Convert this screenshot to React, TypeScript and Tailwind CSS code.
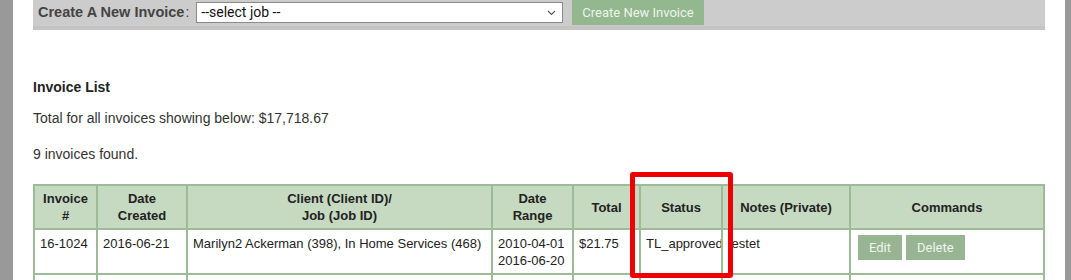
import React from 'react';

const rows = [
    {
        id: '16-1024',
        created: '2016-06-21',
        client: 'Marilyn2 Ackerman (398), In Home Services (468)',
        range: ['2010-04-01', '2016-06-20'],
        total: '$21.75',
        status: 'TL_approved',
        notes: 'testet',
    },
    {
        id: '16-1023',
        created: '2016-06-16',
        client: 'Marilyn2 Ackerman (398), Transcription and Medical Coding (470)',
        range: ['2016-06-06', '2016-06-10'],
        total: '$1,340.00',
        status: 'pending',
        notes: 'edit',
    },
];

const th = 'border-2 border-[#9dbb97] bg-[#c6d9c1] font-bold text-[#222] text-center align-middle px-[4px] py-[4px]';
const td = 'border-2 border-[#9dbb97] align-top px-[5px] pt-[5px] pb-[4px] text-left whitespace-nowrap overflow-hidden';

export default function App() {
    return (
        <div className="relative flex h-[280px] w-[1071px] overflow-hidden bg-white text-[14px] leading-[17px] text-[#333]" style={{ fontFamily: '"Liberation Sans", Arial, sans-serif' }}>
            <div className="w-[13px] shrink-0 bg-[#999]" />
            <div className="flex-1 px-[20px]">
                {/* create bar */}
                <div className="flex h-[30px] items-start border-b-[4px] border-[#c4c4c4] bg-[#cccccc] pl-[5px]">
                    <div className="mt-[4px] flex items-center">
                        <span className="text-[14.5px] font-bold text-[#444]">Create A New Invoice</span>
                        <span className="ml-[1px] text-[#444]">:</span>
                    </div>
                    <div className="ml-[7px] mt-[2px] flex h-[21px] w-[367px] items-center justify-between border border-[#8a8a8a] bg-white pl-[4px] pr-[6px] text-[14px] text-[#111]" style={{ fontFamily: 'Roboto, "Open Sans", sans-serif' }}>
                        <span>--select job --</span>
                        <svg width="9" height="6" viewBox="0 0 9 6" fill="none" stroke="#555" strokeWidth="1.1"><path d="M1 1l3.5 3.5L8 1" /></svg>
                    </div>
                    <button className="ml-[9px] h-[25px] bg-[#93b78e] px-[10px] text-[13px] text-[#eef5ec]" style={{ fontFamily: 'Roboto, "Open Sans", sans-serif' }}>Create New Invoice</button>
                </div>

                <div className="mt-[49px] font-bold text-[#222]">Invoice List</div>
                <div className="mt-[14px]">Total for all invoices showing below: $17,718.67</div>
                <div className="mt-[19px]">9 invoices found.</div>

                <table className="mt-[21px] w-[1010px] table-fixed border-collapse border-2 border-[#9dbb97] text-[13px] text-[#222]">
                    <colgroup>
                        <col className="w-[63px]" />
                        <col className="w-[90px]" />
                        <col className="w-[305px]" />
                        <col className="w-[81px]" />
                        <col className="w-[67px]" />
                        <col className="w-[82px]" />
                        <col className="w-[128px]" />
                        <col className="w-[194px]" />
                    </colgroup>
                    <thead>
                        <tr className="h-[44px]">
                            <th className={th}>Invoice<br />#</th>
                            <th className={th}>Date<br />Created</th>
                            <th className={th}>Client (Client ID)/<br />Job (Job ID)</th>
                            <th className={th}>Date<br />Range</th>
                            <th className={th}>Total</th>
                            <th className={th}>Status</th>
                            <th className={th}>Notes (Private)</th>
                            <th className={th}>Commands</th>
                        </tr>
                    </thead>
                    <tbody>
                        {rows.map((r) => (
                            <tr key={r.id}>
                                <td className={td}>{r.id}</td>
                                <td className={td}>{r.created}</td>
                                <td className={`${td} whitespace-normal`}>{r.client}</td>
                                <td className={td}>{r.range[0]}<br />{r.range[1]}</td>
                                <td className={`${td} pr-[2px]`}>{r.total}</td>
                                <td className={td}>{r.status}</td>
                                <td className={td}>{r.notes}</td>
                                <td className={`${td} pl-[7px] pt-[4px]`}>
                                    <div className="flex gap-[4px]" style={{ fontFamily: 'Roboto, "Open Sans", sans-serif' }}>
                                        <button className="h-[25px] bg-[#97b592] px-[11px] text-[13px] text-[#eef5ec]">Edit</button>
                                        <button className="h-[25px] bg-[#97b592] px-[11px] text-[13px] text-[#eef5ec]">Delete</button>
                                    </div>
                                </td>
                            </tr>
                        ))}
                    </tbody>
                </table>
            </div>
            <div className="w-[8px] shrink-0 bg-[#999]" />

            {/* annotation */}
            <div className="absolute left-[630px] top-[172px] h-[106px] w-[103px] rounded-[3px] border-[5px] border-[#ee0000]" />
        </div>
    );
}
